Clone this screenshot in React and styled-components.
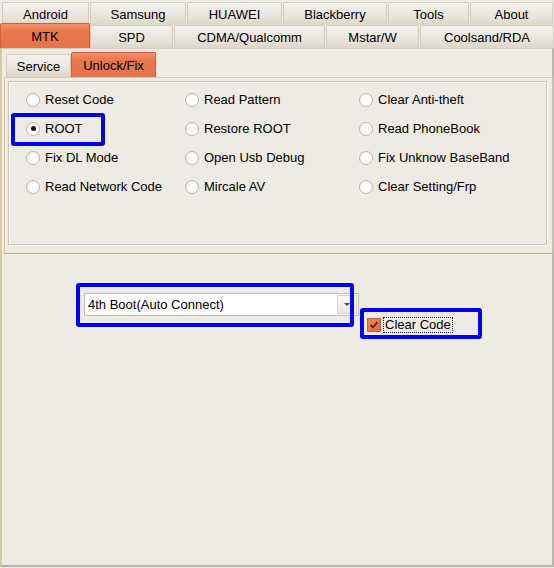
import React, { useState } from 'react';
import styled, { createGlobalStyle } from 'styled-components';

const GlobalStyle = createGlobalStyle`
  html, body {
    margin: 0;
    padding: 0;
    background: #eeebe5;
  }
  * { box-sizing: border-box; }
`;

const Window = styled.div`
  width: 554px;
  height: 568px;
  background: #eeebe5;
  font-family: "Liberation Sans", Arial, sans-serif;
  font-size: 13px;
  color: #000;
  display: flex;
  flex-direction: column;
  padding-top: 1px;
  position: relative;
`;

const TabRow = styled.div`
  display: flex;
  height: ${p => p.$h}px;
  padding-left: ${p => p.$pl || 0}px;
  align-items: flex-end;
`;

const Tab = styled.div`
  width: ${p => p.$w}px;
  height: ${p => (p.$active ? 25 : 23)}px;
  margin-left: ${p => p.$ml || 0}px;
  display: flex;
  align-items: center;
  justify-content: center;
  border: 1px solid ${p => (p.$active ? '#cf5f35' : '#d6ccb8')};
  border-bottom: none;
  border-radius: 2px 2px 0 0;
  background: ${p =>
    p.$active
      ? 'linear-gradient(#f0956c, #e8784a 30%, #e6734a)'
      : 'linear-gradient(#f4f2ee, #e9e5dd 60%, #ddd6c9)'};
  position: relative;
  z-index: ${p => (p.$active ? 2 : 1)};
  padding-top: 1px;
  white-space: nowrap;
`;

const MainPanel = styled.div`
  flex: 1;
  margin-bottom: 1px;
  border-left: 2px solid #d9c8a8;
  border-right: 2px solid #bdb6a8;
  border-bottom: 2px solid #b8b2a6;
  border-top: 1px solid #d6ccb8;
  background: #eeebe5;
  display: flex;
  flex-direction: column;
  padding: 3px 0 0 2px;
`;

const InnerTabs = styled.div`
  display: flex;
  height: 25px;
  align-items: flex-end;
  padding-left: 2px;
`;

const SmallTab = styled(Tab)`
  height: ${p => (p.$active ? 25 : 23)}px;
`;

const TabPage = styled.div`
  height: 177px;
  width: 549px;
  border-top: 1px solid #d6ccb8;
  border-left: 1px solid #d6c4a4;
  border-right: 1px solid #c9c2b4;
  border-bottom: 1px solid #c4ae8a;
  background: #eeebe5;
  padding: 3px 5px 8px 3px;
`;

const GroupBox = styled.div`
  height: 100%;
  border: 1px solid #d0c4ad;
  box-shadow: inset 1px 1px 0 #fff, 1px 1px 0 #fff;
  display: grid;
  grid-template-columns: 159px 174px 1fr;
  grid-auto-rows: 29px;
  padding: 3px 0 0 17px;
`;

const Option = styled.label`
  display: flex;
  align-items: center;
  gap: 5px;
  white-space: nowrap;
  cursor: default;
`;

const Radio = styled.span`
  width: 14px;
  height: 14px;
  border-radius: 50%;
  border: 1px solid #b9b6ae;
  background: radial-gradient(circle at 60% 60%, #ffffff 40%, #eeece6 100%);
  display: flex;
  align-items: center;
  justify-content: center;
  flex: none;

  &::after {
    content: '';
    width: 5px;
    height: 5px;
    border-radius: 50%;
    background: ${p => (p.$checked ? '#111' : 'transparent')};
  }
`;

const Lower = styled.div`
  display: flex;
  padding: 39px 0 0 80px;
  align-items: flex-start;
`;

const Select = styled.div`
  width: 275px;
  height: 23px;
  background: #fff;
  border: 1px solid #c3c0b8;
  display: flex;
  align-items: center;
  padding-left: 3px;
`;

const SelectText = styled.span`
  flex: 1;
`;

const DropButton = styled.span`
  width: 20px;
  height: 19px;
  margin-right: 1px;
  border: 1px solid #d8d5cd;
  background: linear-gradient(#fbfbf9, #e9e7e1);
  display: flex;
  align-items: center;
  justify-content: center;

  &::after {
    content: '';
    border-left: 3px solid transparent;
    border-right: 3px solid transparent;
    border-top: 3px solid #4d4d4d;
  }
`;

const CheckRow = styled.label`
  display: flex;
  align-items: center;
  gap: 2px;
  margin: 24px 0 0 8px;
`;

const CheckBox = styled.span`
  width: 14px;
  height: 14px;
  border: 1px solid #c2613b;
  background: linear-gradient(135deg, #f08a5e, #e06a3e);
  display: flex;
  align-items: center;
  justify-content: center;
`;

const FocusText = styled.span`
  border: 1px dotted #222;
  padding: 0 1px;
  line-height: 14px;
`;

const Highlight = styled.div`
  position: absolute;
  left: ${p => p.$x}px;
  top: ${p => p.$y}px;
  width: ${p => p.$w}px;
  height: ${p => p.$h}px;
  border: 4px solid #0000f0;
  border-radius: 3px;
  pointer-events: none;
  z-index: 5;
`;

const row1 = [
  ['Android', 87, 2],
  ['Samsung', 96, 1],
  ['HUAWEI', 95, 1],
  ['Blackberry', 104, 1],
  ['Tools', 81, 1],
  ['About', 83, 1],
];

const row2 = [
  ['MTK', 90, 0, true],
  ['SPD', 83, 0],
  ['CDMA/Qualcomm', 151, 1],
  ['Mstar/W', 93, 1],
  ['Coolsand/RDA', 134, 1],
];

const options = [
  'Reset Code', 'Read Pattern', 'Clear Anti-theft',
  'ROOT', 'Restore ROOT', 'Read PhoneBook',
  'Fix DL Mode', 'Open Usb Debug', 'Fix Unknow BaseBand',
  'Read Network Code', 'Mircale AV', 'Clear Setting/Frp',
];

const Check = () => (
  <svg width="10" height="10" viewBox="0 0 10 10">
    <path d="M1.5 5 L4 7.5 L8.5 2" fill="none" stroke="#5a2410" strokeWidth="1.8" />
  </svg>
);

export default function App() {
  const [selected, setSelected] = useState('ROOT');
  return (
    <Window>
      <GlobalStyle />
      <TabRow $h={24}>
        {row1.map(([t, w, ml]) => (
          <Tab key={t} $w={w} $ml={ml}>{t}</Tab>
        ))}
      </TabRow>
      <TabRow $h={23}>
        {row2.map(([t, w, ml, a]) => (
          <Tab key={t} $w={w} $ml={ml} $active={a}>{t}</Tab>
        ))}
      </TabRow>
      <MainPanel>
        <InnerTabs>
          <SmallTab $w={65}>Service</SmallTab>
          <SmallTab $w={85} $active>Unlock/Fix</SmallTab>
        </InnerTabs>
        <TabPage>
          <GroupBox>
            {options.map(o => (
              <Option key={o} onClick={() => setSelected(o)}>
                <Radio $checked={selected === o} />
                {o}
              </Option>
            ))}
          </GroupBox>
        </TabPage>
        <Lower>
          <Select>
            <SelectText>4th Boot(Auto Connect)</SelectText>
            <DropButton />
          </Select>
          <CheckRow>
            <CheckBox><Check /></CheckBox>
            <FocusText>Clear Code</FocusText>
          </CheckRow>
        </Lower>
      </MainPanel>
      <Highlight $x={11} $y={113} $w={94} $h={33} />
      <Highlight $x={76} $y={283} $w={278} $h={44} />
      <Highlight $x={360} $y={308} $w={122} $h={31} />
    </Window>
  );
}
